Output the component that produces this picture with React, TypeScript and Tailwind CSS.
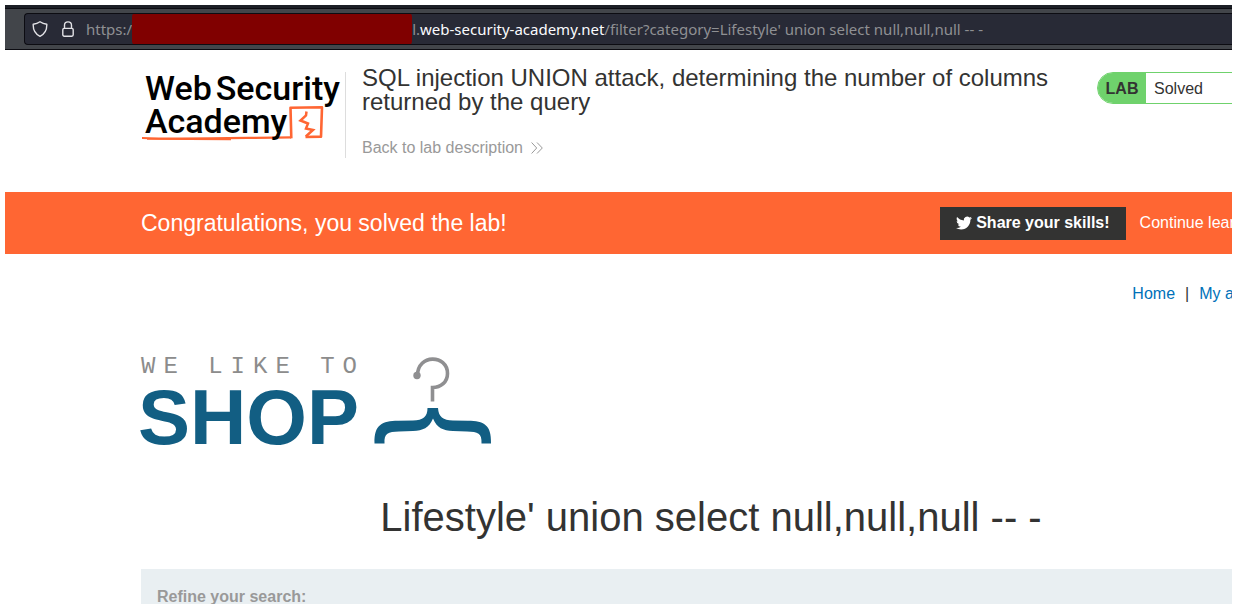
function ShieldIcon() {
  return (
    <svg className="h-4 w-4" viewBox="0 0 16 16" fill="none" stroke="#e2e2e6" strokeWidth="1.4" strokeLinejoin="round" aria-hidden="true">
      <path d="M8 .8 C6 2.2 3.600 3 1.200 3.300 C1 8.800 3.200 13 8 15.300 C12.800 13 15 8.800 14.800 3.300 C12.400 3 10 2.200 8 .8 Z" />
    </svg>
  );
}

function LockIcon() {
  return (
    <svg className="h-4 w-3" viewBox="0 0 12 16" fill="none" stroke="#e2e2e6" strokeWidth="1.4" aria-hidden="true">
      <rect x=".8" y="7.400" width="10.400" height="7.800" rx="1.400" />
      <path d="M2.500 7.400 V4.200 C2.500 -.3 9.500 -.3 9.500 4.200 V7.400" />
    </svg>
  );
}

function DoubleChevron({ className }: { className: string }) {
  return (
    <svg className={className} viewBox="0 0 12 12" fill="none" stroke="currentColor" strokeWidth="1" aria-hidden="true">
      <path d="M.6 .5 L5.700 6 L.6 11.500 M6 .5 L11.300 6 L6 11.500" />
    </svg>
  );
}

function TwitterIcon() {
  return (
    <svg className="h-4 w-4" viewBox="0 0 24 24" fill="currentColor" aria-hidden="true">
      <path d="M23.95 4.57a10 10 0 0 1-2.82.77 4.96 4.96 0 0 0 2.16-2.72c-.95.55-2 .95-3.13 1.18a4.92 4.92 0 0 0-8.38 4.48C7.69 8.1 4.07 6.13 1.64 3.16a4.82 4.82 0 0 0-.67 2.48c0 1.71.87 3.21 2.19 4.1a4.9 4.9 0 0 1-2.23-.62v.06a4.92 4.92 0 0 0 3.95 4.83 5 5 0 0 1-2.21.08 4.94 4.94 0 0 0 4.6 3.42A9.87 9.87 0 0 1 0 19.54a13.99 13.99 0 0 0 7.56 2.21c9.05 0 14-7.5 14-13.98 0-.21 0-.42-.02-.63a9.94 9.94 0 0 0 2.46-2.55z" />
    </svg>
  );
}

function AddressBar() {
  return (
    <div className="border-b border-[#0c0c12] bg-[#42454a]">
      <div className="h-1 border-b border-[#0c0c12] bg-[#1c1f26]" />
      <div className="pt-1 pb-1 pl-[19px]">
        <div className="flex h-8 items-center overflow-hidden rounded-l border border-r-0 border-[#0c0c12] bg-[#282a36] pl-[7px] font-['Noto_Sans',sans-serif] text-[15px] whitespace-nowrap text-[#8f9093]">
          <ShieldIcon />
          <span className="ml-[14px] flex">
            <LockIcon />
          </span>
          <span className="ml-3">https:/</span>
          <span className="h-8 w-[280px] rounded bg-[#800000]" />
          <span>
            l.<span className="text-[#fbfbfe]">web-security-academy.net</span>/filter?category=Lifestyle' union select null,null,null -- -
          </span>
        </div>
      </div>
    </div>
  );
}

function AcademyLogo() {
  return (
    <a href="#academy" className="relative block h-[72px] w-[204px] font-[Roboto,sans-serif] text-[34px] leading-[33px] font-medium text-black">
      <svg className="absolute top-0 left-0 h-[72px] w-[204px]" viewBox="0 0 204 72" fill="none" stroke="#ff6633" aria-hidden="true">
        <path d="M1 66 C40 67.500 90 66 150 65.300" strokeWidth="2.200" />
        <path d="M6 67.200 L90 67.600" strokeWidth="1.200" />
        <path d="M150.300 66.400 L149.500 35.700 L181 35.200 L180 64.600 L164.500 65" strokeWidth="2.600" strokeLinejoin="round" />
        <path d="M165.500 39.500 L165 43.500 L159.500 48.500 L167 51.500 L165 56.500 L172 58 L164.800 64.500" strokeWidth="2.500" />
      </svg>
      <span className="relative flex gap-1 pl-1">
        <span>Web</span>
        <span>Security</span>
      </span>
      <span className="relative block pl-1">Academy</span>
    </a>
  );
}

function Header() {
  return (
    <header className="mx-auto flex w-[1140px] items-start pt-[22px] pb-[34px]">
      <div className="flex h-[86px] border-r border-[#dddddd]">
        <AcademyLogo />
      </div>
      <div className="-mt-[6px] ml-4 w-[700px]">
        <h2 className="text-2xl leading-6">SQL injection UNION attack, determining the number of columns returned by the query</h2>
        <a href="#lab" className="mt-6 flex items-center gap-2 text-base leading-5 text-[#999999]">
          Back to lab description
          <DoubleChevron className="h-3 w-3" />
        </a>
      </div>
      <div className="ml-auto flex h-8 w-[184px] overflow-hidden rounded-full border border-[#6fd26c] text-base">
        <span className="flex w-12 items-center justify-center bg-[#6fd26c] pt-px font-bold">LAB</span>
        <span className="flex items-center pt-px pl-2">Solved</span>
      </div>
    </header>
  );
}

function SolvedBanner() {
  return (
    <section className="bg-[#ff6633] text-white">
      <div className="mx-auto flex h-[62px] w-[1140px] items-center">
        <p className="text-[23px]">Congratulations, you solved the lab!</p>
        <button type="button" className="ml-auto flex h-[33px] items-center gap-1 bg-[#333332] px-4 text-base font-bold">
          <TwitterIcon />
          Share your skills!
        </button>
        <a href="#learning" className="ml-[14px] flex items-center gap-1 text-base">
          Continue learning
          <DoubleChevron className="h-3 w-3" />
        </a>
      </div>
    </section>
  );
}

function ShopLogo() {
  return (
    <div className="flex items-start">
      <div className="w-[216px]">
        <p className="pt-px font-['Liberation_Mono',monospace] text-2xl leading-5 tracking-[8px] whitespace-nowrap text-[#8c8c8c]">WE LIKE TO</p>
        <p className="-ml-[3px] text-[78px] leading-[80px] font-bold text-[#125e83]">SHOP</p>
      </div>
      <svg className="ml-4 h-[88px] w-[120px]" viewBox="0 0 120 88" fill="none" aria-hidden="true">
        <path d="M44.500 19.500 C44.500 -2.500 74.500 -1.500 74.500 17.500 C74.500 26 68 31.500 59.500 31.500 V45.500" stroke="#8f8f91" strokeWidth="3.600" />
        <circle cx="44" cy="19.500" r="3.700" fill="#8f8f91" />
        <path d="M54.500 52 H65 C65.500 61 70 64.200 80 64.400 L95 64.800 C111 65.200 118.500 68.500 118 87.500 H108.500 C109 77 105 75.800 94 75.500 L80 75 C70 74.500 64 72 60 62.500 C56 72 50 74.500 40 75 L26 75.500 C15 75.800 11 77 11.500 87.500 H1.500 C1 68.500 9 65.200 25 64.800 L40 64.400 C50 64.200 54.500 61 54.500 52 Z" fill="#125e83" />
      </svg>
    </div>
  );
}

export default function App() {
  return (
    <div className="h-screen overflow-hidden bg-white p-[5px] font-['Liberation_Sans',Arial,sans-serif] text-[#333332]">
      <div className="h-full overflow-hidden">
        <AddressBar />
        <div className="min-w-[1412px]">
          <Header />
          <SolvedBanner />
          <main className="mx-auto w-[1140px]">
            <nav className="flex justify-end gap-[10px] pt-7 text-base text-[#0071b9]">
              <a href="#home">Home</a>
              <span className="text-[#333332]">|</span>
              <a href="#account">My account</a>
            </nav>
            <div className="pt-[50px]">
              <ShopLogo />
            </div>
            <h1 className="pt-9 text-center text-[40px] leading-[48px]">Lifestyle' union select null,null,null -- -</h1>
            <section className="mt-7 bg-[#e9eff2] px-4 pt-4 pb-8">
              <p className="text-base font-bold text-[#999999]">Refine your search:</p>
            </section>
          </main>
        </div>
      </div>
    </div>
  );
}
